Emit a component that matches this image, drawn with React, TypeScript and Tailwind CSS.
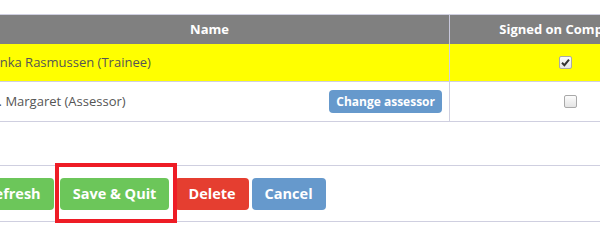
import React from "react";

function Checkbox({ checked }: { checked?: boolean }) {
  return (
    <span className="inline-flex h-[13px] w-[13px] items-center justify-center rounded-[2px] border border-[#a9a9a9] bg-gradient-to-b from-[#fcfcfc] to-[#e4e4e4]">
      {checked && (
        <svg width="9" height="9" viewBox="0 0 9 9">
          <path d="M1 4.8 L3.4 7.2 L8 1.6" fill="none" stroke="#333" strokeWidth="2" />
        </svg>
      )}
    </span>
  );
}

function Btn({ label, color }: { label: string; color: string }) {
  return (
    <button
      className={`h-[32px] shrink-0 rounded-[4px] px-[13px] text-[14.5px] font-bold text-white ${color}`}
    >
      {label}
    </button>
  );
}

export default function App() {
  return (
    <div className="relative h-[249px] w-[600px] overflow-hidden bg-white font-['Open_Sans',sans-serif] text-[13px] text-[#555]">
      <div className="h-[14px]" />
      <div className="-ml-[30px] w-[720px] border-t border-[#cfcfe0]">
        {/* header */}
        <div className="flex h-[29px] bg-[#808080] font-bold text-white">
          <div className="flex w-[480px] items-center justify-center border-r border-[#c8c8dc]">Name</div>
          <div className="flex w-[240px] items-center justify-center">Signed on Completion</div>
        </div>
        {/* row 1 */}
        <div className="flex h-[38px] border-b border-[#cfcfe0] bg-[#ffff00]">
          <div className="flex w-[480px] items-center border-r border-[#cfcfe0] pl-[19px]">Janka Rasmussen (Trainee)</div>
          <div className="flex w-[240px] items-center justify-center pr-[10px]">
            <Checkbox checked />
          </div>
        </div>
        {/* row 2 */}
        <div className="flex h-[40px] border-b border-[#cfcfe0]">
          <div className="flex w-[480px] items-center justify-between border-r border-[#cfcfe0] pl-[19px] pr-[7px]">
            <span>H. Margaret (Assessor)</span>
            <button className="h-[23px] rounded-[4px] bg-[#6699cc] px-[7px] text-[12px] font-bold text-white">
              Change assessor
            </button>
          </div>
          <div className="flex w-[240px] items-center justify-center">
            <Checkbox />
          </div>
        </div>
      </div>

      <div className="mt-[43px] border-t border-b border-[#cfcfe0]">
        <div className="-ml-[28px] flex h-[55px] items-center">
          <Btn label="Refresh" color="bg-[#6cc65a]" />
          <div className="ml-[6px]">
            <Btn label="Save & Quit" color="bg-[#6cc65a]" />
          </div>
          <div className="ml-[6px]">
            <Btn label="Delete" color="bg-[#e53e30]" />
          </div>
          <div className="ml-[3px]">
            <Btn label="Cancel" color="bg-[#6699cc]" />
          </div>
        </div>
      </div>

      <div className="pointer-events-none absolute left-[55px] top-[163px] h-[60px] w-[122px] border-4 border-[#ee1c25]" />
    </div>
  );
}
